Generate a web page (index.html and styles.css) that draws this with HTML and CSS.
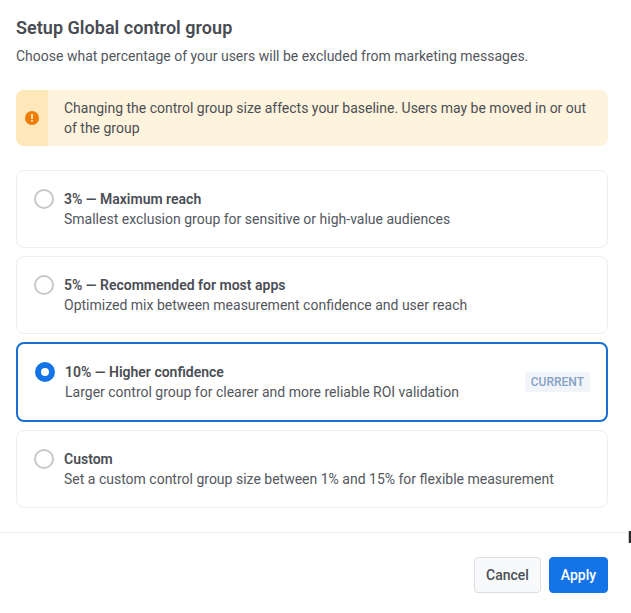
FILE: index.html
```html
<!DOCTYPE html>
<html lang="en">
<head>
<meta charset="utf-8">
<title>Setup Global control group</title>
<link rel="stylesheet" href="styles.css">
</head>
<body>
<main class="dialog">
  <header class="head">
    <h1 class="title">Setup Global control group</h1>
    <p class="subtitle">Choose what percentage of your users will be excluded from marketing messages.</p>
  </header>
  <div class="alert">
    <div class="alert-band">
      <svg class="alert-icon" viewBox="0 0 14 14" width="14" height="14"><circle cx="7" cy="7" r="7" fill="#ee7f06"/><rect x="6.1" y="3" width="1.8" height="5" rx=".6" fill="#ffe9bf"/><rect x="6.1" y="9" width="1.8" height="1.8" rx=".6" fill="#ffe9bf"/></svg>
    </div>
    <p class="alert-text">Changing the control group size affects your baseline. Users may be moved in or out of the group</p>
  </div>
  <div class="options">
    <div class="option">
      <span class="radio"></span>
      <div class="option-body">
        <div class="option-title">3% — Maximum reach</div>
        <div class="option-desc">Smallest exclusion group for sensitive or high-value audiences</div>
      </div>
    </div>
    <div class="option">
      <span class="radio"></span>
      <div class="option-body">
        <div class="option-title">5% — Recommended for most apps</div>
        <div class="option-desc">Optimized mix between measurement confidence and user reach</div>
      </div>
    </div>
    <div class="option option-selected">
      <span class="radio radio-on"></span>
      <div class="option-body">
        <div class="option-title">10% — Higher confidence</div>
        <div class="option-desc">Larger control group for clearer and more reliable ROI validation</div>
      </div>
      <span class="tag">CURRENT</span>
    </div>
    <div class="option">
      <span class="radio"></span>
      <div class="option-body">
        <div class="option-title">Custom</div>
        <div class="option-desc">Set a custom control group size between 1% and 15% for flexible measurement</div>
      </div>
    </div>
  </div>
  <footer class="foot">
    <button class="btn btn-secondary" type="button">Cancel</button>
    <button class="btn btn-primary" type="button">Apply</button>
  </footer>
  <span class="cursor"></span>
</main>
</body>
</html>
```
FILE: styles.css
```css
* { box-sizing: border-box; }
html, body { margin: 0; padding: 0; background: #fff; }
body { font-family: Roboto, "Liberation Sans", sans-serif; color: #3f434a; overflow: hidden; }
.dialog { position: relative; width: 631px; height: 613px; display: flex; flex-direction: column; }
.head { padding: 16px 16px 0; }
.title { margin: 0; font-size: 18px; line-height: 24px; font-weight: 600; color: #474b52; letter-spacing: .03px; }
.subtitle { margin: 6px 0 0; font-size: 14px; line-height: 20px; color: #53575e; }
.alert { margin: 24px 23px 0 16px; height: 56px; display: flex; border-radius: 8px; overflow: hidden; background: #fef3dc; }
.alert-band { width: 32px; flex: none; background: #fee7b8; display: flex; align-items: center; justify-content: center; }
.alert-text { margin: 0; padding: 8px 16px; font-size: 14px; line-height: 20px; color: #4b4f55; }
.options { margin: 24px 23px 0 16px; display: flex; flex-direction: column; gap: 8px; }
.option { height: 78px; display: flex; align-items: flex-start; gap: 10px; padding: 18px 17px; border: 1px solid #eceef1; border-radius: 8px; background: #fff; }
.option-selected { height: 80px; border: 2px solid #1a6fd0; padding: 18px 16px 18px 17px; }
.radio { width: 20px; height: 20px; flex: none; border-radius: 50%; border: 2px solid #c6c8cb; }
.radio-on { border: 6px solid #1473e6; background: #fff; }
.option-body { flex: 1; min-width: 0; }
.option-title { font-size: 14px; line-height: 20px; font-weight: 600; color: #4a4e55; }
.option-desc { font-size: 14px; line-height: 20px; color: #53575e; }
.tag { flex: none; align-self: center; height: 20px; padding: 0 6px; font-size: 12px; line-height: 20px; font-weight: 500; color: #84a1c6; background: #f1f4f8; border-radius: 3px; }
.foot { margin-top: 24px; border-top: 1px solid #e9ebee; padding: 24px 23px 0 0; display: flex; justify-content: flex-end; gap: 8px; }
.btn { height: 36px; border-radius: 4px; font-family: inherit; font-size: 14px; font-weight: 500; padding: 0; cursor: pointer; }
.btn-secondary { width: 67px; background: #f8f9fb; border: 1px solid #dcdee1; color: #4b4f55; }
.btn-primary { width: 59px; background: #1473e6; border: 1px solid #1473e6; color: #fff; }
.cursor { position: absolute; left: 628px; top: 531px; width: 3px; height: 12px; background: #2a2a2a; border-left: 1px solid #c9c9c9; }
```
